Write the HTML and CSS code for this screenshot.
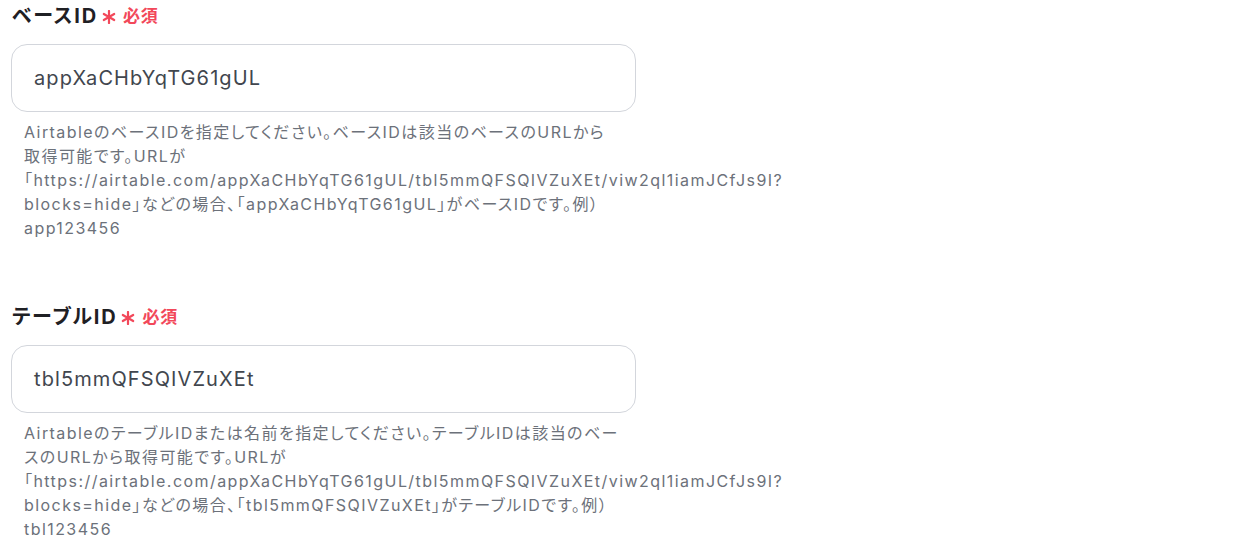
FILE: index.html
```html
<!DOCTYPE html>
<html lang="ja">
<head>
<meta charset="utf-8">
<link rel="stylesheet" href="styles.css">
</head>
<body>
<div class="form">
  <div class="field">
    <div class="label">
      <span class="label-text">ベースID</span>
      <svg class="req-icon" width="14" height="14" viewBox="0 0 14 14" aria-hidden="true">
        <g stroke="#f2485a" stroke-width="2.2" stroke-linecap="round">
          <line x1="7" y1="1" x2="7" y2="13"/>
          <line x1="1.8" y1="4" x2="12.2" y2="10"/>
          <line x1="1.8" y1="10" x2="12.2" y2="4"/>
        </g>
      </svg>
      <span class="req-text">必須</span>
    </div>
    <div class="input">appXaCHbYqTG61gUL</div>
    <p class="help">AirtableのベースIDを指定してください。ベースIDは該当のベースのURLから取得可能です。URLが「https://airtable.com/appXaCHbYqTG61gUL/tbl5mmQFSQIVZuXEt/viw2ql1iamJCfJs9I?blocks=hide」などの場合、「appXaCHbYqTG61gUL」がベースIDです。例）app123456</p>
  </div>
  <div class="field">
    <div class="label">
      <span class="label-text">テーブルID</span>
      <svg class="req-icon" width="14" height="14" viewBox="0 0 14 14" aria-hidden="true">
        <g stroke="#f2485a" stroke-width="2.2" stroke-linecap="round">
          <line x1="7" y1="1" x2="7" y2="13"/>
          <line x1="1.8" y1="4" x2="12.2" y2="10"/>
          <line x1="1.8" y1="10" x2="12.2" y2="4"/>
        </g>
      </svg>
      <span class="req-text">必須</span>
    </div>
    <div class="input">tbl5mmQFSQIVZuXEt</div>
    <p class="help">AirtableのテーブルIDまたは名前を指定してください。テーブルIDは該当のベースのURLから取得可能です。URLが「https://airtable.com/appXaCHbYqTG61gUL/tbl5mmQFSQIVZuXEt/viw2ql1iamJCfJs9I?blocks=hide」などの場合、「tbl5mmQFSQIVZuXEt」がテーブルIDです。例）tbl123456</p>
  </div>
</div>
</body>
</html>
```

FILE: styles.css
```css
html, body {
  margin: 0;
  padding: 0;
  background: #ffffff;
}
body {
  font-family: "Inter", "Noto Sans CJK JP", sans-serif;
  font-feature-settings: "palt";
}
.form {
  padding: 0 0 0 11px;
  display: flex;
  flex-direction: column;
  gap: 61px;
}
.field {
  display: flex;
  flex-direction: column;
  width: 625px;
}
.label {
  display: flex;
  align-items: center;
  height: 28px;
  padding-left: 1px;
  margin-bottom: 16px;
}
.label-text {
  font-size: 20px;
  font-weight: 700;
  letter-spacing: 0.09em;
  color: #1f2024;
}
.req-icon {
  margin-left: 4px;
  margin-top: 5px;
}
.req-text {
  margin-left: 7px;
  font-size: 17px;
  font-weight: 700;
  letter-spacing: 0.05em;
  color: #f2485a;
}
.input {
  box-sizing: border-box;
  height: 68px;
  border: 1px solid #d3d6dc;
  border-radius: 16px;
  padding: 0 22px;
  display: flex;
  align-items: center;
  font-size: 20px;
  letter-spacing: 0.055em;
  color: #41464e;
}
.help {
  margin: 8px 0 0 13px;
  width: 596px;
  font-size: 16px;
  line-height: 24px;
  letter-spacing: 0.09em;
  color: #6c717a;
}
```
